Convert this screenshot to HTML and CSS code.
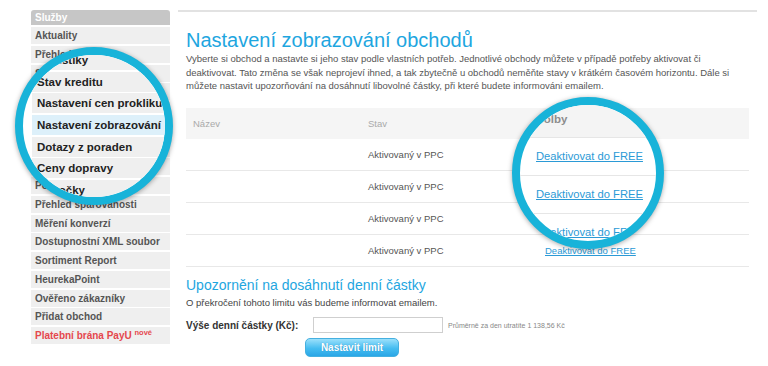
FILE: index.html
```html
<!DOCTYPE html>
<html lang="cs">
<head>
    <meta charset="UTF-8">
    <meta name="viewport" content="width=device-width, initial-scale=1.0">
    <title>Nastavení zobrazování obchodů</title>
    <link rel="stylesheet" href="styles.css">
</head>
<body>
    <div class="page">
        <aside class="menu">
            <div class="menu-title">Služby</div>
            <ul class="menu-list">
                <li>Aktuality</li>
                <li>Přehled</li>
                <li>Statistiky</li>
                <li>Stav kreditu</li>
                <li>Nastavení cen prokliku</li>
                <li class="active">Nastavení zobrazování</li>
                <li>Dotazy z poraden</li>
                <li>Ceny dopravy</li>
                <li>Pobočky</li>
                <li>Přehled spárovanosti</li>
                <li>Měření konverzí</li>
                <li>Dostupnostní XML soubor</li>
                <li>Sortiment Report</li>
                <li>HeurekaPoint</li>
                <li>Ověřeno zákazníky</li>
                <li>Přidat obchod</li>
                <li class="red">Platební brána PayU <sup>nové</sup></li>
            </ul>
        </aside>

        <main class="content">
            <h1>Nastavení zobrazování obchodů</h1>
            <p class="intro">
                Vyberte si obchod a nastavte si jeho stav podle vlastních potřeb. Jednotlivé obchody můžete v případě potřeby aktivovat či<br>
                deaktivovat. Tato změna se však neprojeví ihned, a tak zbytečně u obchodů neměňte stavy v krátkém časovém horizontu. Dále si<br>
                můžete nastavit upozorňování na dosáhnutí libovolné částky, při které budete informováni emailem.
            </p>

            <table class="shops">
                <thead>
                    <tr><th>Název</th><th>Stav</th><th>Volby</th></tr>
                </thead>
                <tbody>
                    <tr><td></td><td>Aktivovaný v PPC</td><td><a href="#">Deaktivovat do FREE</a></td></tr>
                    <tr><td></td><td>Aktivovaný v PPC</td><td><a href="#">Deaktivovat do FREE</a></td></tr>
                    <tr><td></td><td>Aktivovaný v PPC</td><td><a href="#">Deaktivovat do FREE</a></td></tr>
                    <tr><td></td><td>Aktivovaný v PPC</td><td><a href="#">Deaktivovat do FREE</a></td></tr>
                </tbody>
            </table>

            <h2>Upozornění na dosáhnutí denní částky</h2>
            <p class="note">O překročení tohoto limitu vás budeme informovat emailem.</p>
            <form class="limit">
                <div class="limit-row">
                    <label for="limit">Výše denní částky (Kč):</label>
                    <input type="text" id="limit">
                    <span class="avg">Průměrně za den utratíte 1 138,56 Kč</span>
                </div>
                <button type="button">Nastavit limit</button>
            </form>
        </main>

        <!-- lupy -->
        <div class="lens lens-menu">
            <ul class="zoom-list">
                <li>Statistiky</li>
                <li>Stav kreditu</li>
                <li>Nastavení cen prokliku</li>
                <li class="active">Nastavení zobrazování</li>
                <li>Dotazy z poraden</li>
                <li>Ceny dopravy</li>
                <li>Pobočky</li>
            </ul>
        </div>
        <div class="lens lens-table">
            <div class="zoom-head">Volby</div>
            <div class="zoom-row"><a href="#">Deaktivovat do FREE</a></div>
            <div class="zoom-row"><a href="#">Deaktivovat do FREE</a></div>
            <div class="zoom-row"><a href="#">Deaktivovat do FREE</a></div>
        </div>
    </div>
</body>
</html>
```

FILE: styles.css
```css
body {
    margin: 0;
    background: #fff;
    font-family: 'Liberation Sans', Arial, sans-serif;
    color: #555;
}
.page {
    position: relative;
    display: flex;
    align-items: flex-start;
    padding: 10px 0 0 31px;
    width: 768px;
    height: 366px;
    box-sizing: border-box;
    overflow: hidden;
}

/* menu vlevo */
.menu {
    width: 139px;
    flex-shrink: 0;
}
.menu-title {
    height: 15px;
    line-height: 15px;
    padding-left: 4px;
    margin-bottom: 2px;
    background: #c6c6c6;
    border-radius: 3px 3px 0 0;
    color: #fff;
    font-size: 10px;
    font-weight: bold;
}
.menu-list {
    list-style: none;
    margin: 0;
    padding: 0;
}
.menu-list li {
    height: 17px;
    line-height: 17px;
    margin-bottom: 1.75px;
    padding-left: 4px;
    background: #efefef;
    font-size: 10px;
    font-weight: bold;
    color: #555;
    white-space: nowrap;
}
.menu-list li.red, .menu-list li.red sup {
    color: #e5474d;
}
sup {
    font-size: 7.5px;
    vertical-align: 4px;
    line-height: 0;
}

/* obsah */
.content {
    margin-left: 8px;
    width: 579px;
    border-top: 2px solid #e2e2e2;
    padding: 0 8px;
    box-sizing: border-box;
}
h1 {
    margin: 16px 0 0;
    font-size: 20px;
    line-height: 24px;
    font-weight: normal;
    color: #1ea6df;
}
.intro {
    margin: 0;
    font-size: 9.5px;
    line-height: 13.5px;
    color: #555;
    white-space: nowrap;
}
.shops {
    width: 563px;
    margin-top: 15.5px;
    border-collapse: collapse;
    font-size: 9.5px;
}
.shops th {
    height: 31px;
    padding: 0 7px;
    background: #f5f5f5;
    text-align: left;
    font-weight: normal;
    color: #aaa;
}
.shops td {
    height: 31px;
    padding: 0 7px;
    border-bottom: 1px solid #e8e8e8;
    color: #555;
}
.shops th:nth-child(1) { width: 161px; }
.shops th:nth-child(2) { width: 163px; }
.shops a, .lens a {
    color: #2b9ad6;
}
h2 {
    margin: 10px 0 0;
    font-size: 14px;
    line-height: 17px;
    font-weight: normal;
    color: #1ea6df;
}
.note {
    margin: 1.5px 0 0;
    font-size: 9.5px;
    line-height: 13px;
    color: #444;
}
.limit {
    margin: 8.5px 0 0;
}
.limit-row {
    display: flex;
    align-items: center;
    height: 16px;
}
.limit-row label {
    width: 127px;
    font-size: 10px;
    font-weight: bold;
    color: #333;
}
.limit-row input {
    width: 130px;
    height: 16px;
    box-sizing: border-box;
    border: 1px solid #cfcfcf;
    padding: 0 3px;
    margin: 0;
}
.avg {
    margin-left: 5px;
    font-size: 7px;
    color: #888;
}
.limit button {
    display: block;
    margin: 5px 0 0 119px;
    width: 94px;
    height: 19px;
    border: 1px solid #45b0e0;
    border-radius: 5px;
    background: linear-gradient(#9be0fb, #45bdf1 55%, #2aa6e6);
    color: #fff;
    font-family: 'Liberation Sans', Arial, sans-serif;
    font-size: 10px;
    font-weight: bold;
    text-shadow: 0 0 1px rgba(0, 90, 150, 0.5);
    cursor: pointer;
}

/* lupy */
.lens {
    position: absolute;
    border: 8px solid #18b3d9;
    border-radius: 50%;
    overflow: hidden;
    background: #fff;
    box-shadow: 0 1px 5px rgba(0, 0, 0, 0.35);
}
.lens-menu {
    left: 15px;
    top: 47px;
    width: 142px;
    height: 142px;
}
.zoom-list {
    list-style: none;
    margin: -5px 0 0 9px;
    padding: 0;
}
.zoom-list li {
    height: 20px;
    line-height: 20px;
    margin-bottom: 1.7px;
    padding-left: 5px;
    background: #efefef;
    font-size: 11.5px;
    font-weight: bold;
    color: #222;
    white-space: nowrap;
}
.zoom-list li.active, .menu-list li.active {
    background: #ddf0fa;
}
.lens-table {
    left: 512px;
    top: 97px;
    width: 136px;
    height: 136px;
}
.zoom-head {
    height: 32px;
    line-height: 28px;
    padding-left: 17px;
    background: #f4f4f4;
    border-bottom: 1px solid #e6e6e6;
    font-size: 11.5px;
    color: #8d8d8d;
    font-weight: bold;
}
.zoom-row {
    height: 37px;
    line-height: 37px;
    padding-left: 16px;
    border-bottom: 1px solid #e6e6e6;
    font-size: 11.2px;
}
```
